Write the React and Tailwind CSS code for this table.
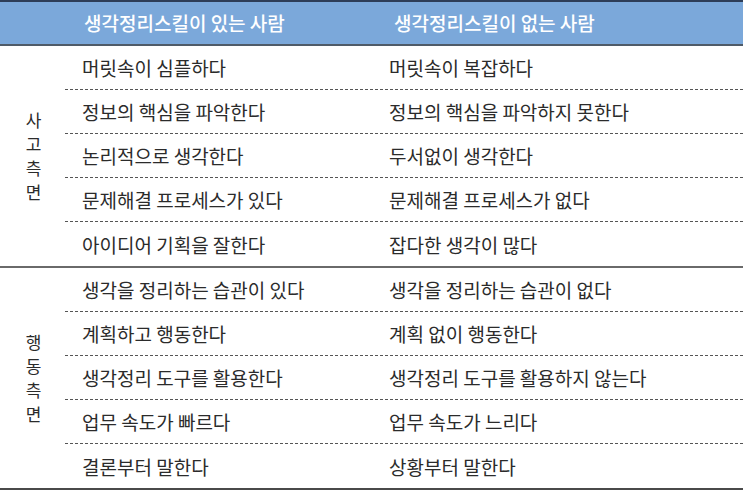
const sections = [
  {
    label: '사고측면',
    rows: [
      ['머릿속이 심플하다', '머릿속이 복잡하다'],
      ['정보의 핵심을 파악한다', '정보의 핵심을 파악하지 못한다'],
      ['논리적으로 생각한다', '두서없이 생각한다'],
      ['문제해결 프로세스가 있다', '문제해결 프로세스가 없다'],
      ['아이디어 기획을 잘한다', '잡다한 생각이 많다'],
    ],
  },
  {
    label: '행동측면',
    rows: [
      ['생각을 정리하는 습관이 있다', '생각을 정리하는 습관이 없다'],
      ['계획하고 행동한다', '계획 없이 행동한다'],
      ['생각정리 도구를 활용한다', '생각정리 도구를 활용하지 않는다'],
      ['업무 속도가 빠르다', '업무 속도가 느리다'],
      ['결론부터 말한다', '상황부터 말한다'],
    ],
  },
];

const Section = ({ label, rows, last }) => (
  <div className={`flex ${last ? 'border-b-2 border-[#4a4a4a]' : 'border-b-2 border-[#6a6a6a]'}`}>
    <div className="w-[65px] flex flex-col items-center justify-center text-[17px] leading-[24px] text-[#2b2b2b] pl-[2px]">
      {label.split('').map((c, i) => (
        <span key={i}>{c}</span>
      ))}
    </div>
    <div className="flex-1 flex flex-col">
      {rows.map(([a, b], i) => (
        <div
          key={i}
          className={`h-[44px] grid grid-cols-[307px_1fr] items-center ${
            i < rows.length - 1 ? 'border-b border-dashed border-[#555]' : ''
          }`}
        >
          <div className="pl-[17px] pt-[2px]">{a}</div>
          <div className="pl-[17px] pt-[2px]">{b}</div>
        </div>
      ))}
    </div>
  </div>
);

export default function App() {
  return (
    <div
      className="w-[743px] h-[493px] bg-white text-[19px] text-[#2b2b2b]"
      style={{ fontFamily: '"Noto Sans CJK KR", "Noto Sans", sans-serif' }}
    >
      <div className="border-t-2 border-[#2d3d58] bg-[#7ba8da] border-b-2 border-b-[#4f5b68] h-[46px] grid grid-cols-[65px_307px_1fr] items-center text-white text-[19px] font-medium">
        <div />
        <div className="pl-[19px]">생각정리스킬이 있는 사람</div>
        <div className="pl-[22px]">생각정리스킬이 없는 사람</div>
      </div>
      {sections.map((s, i) => (
        <Section key={s.label} label={s.label} rows={s.rows} last={i === sections.length - 1} />
      ))}
    </div>
  );
}
